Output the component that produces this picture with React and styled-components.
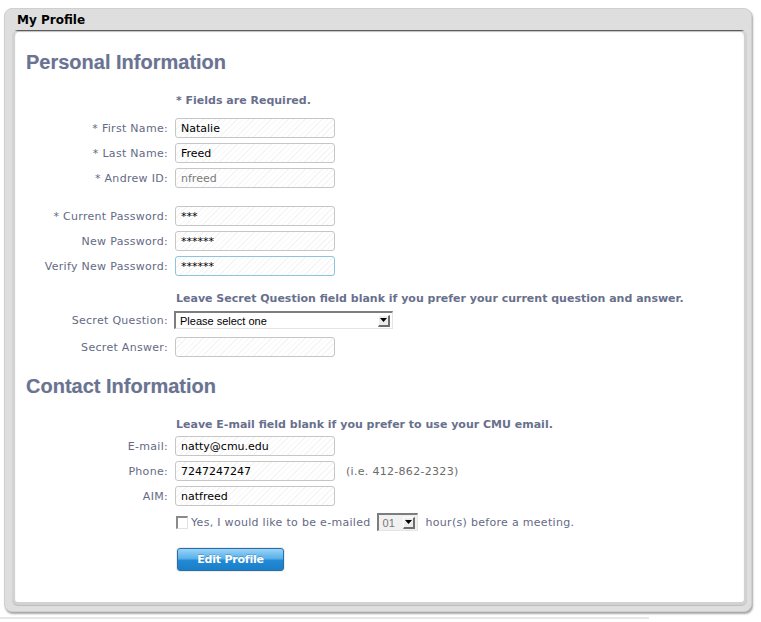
import React from "react";
import styled, { createGlobalStyle } from "styled-components";

const GlobalStyle = createGlobalStyle`
  html, body {
    margin: 0;
    padding: 0;
    background: #ffffff;
    font-family: "DejaVu Sans", Verdana, sans-serif;
  }
`;

const Page = styled.div`
  width: 761px;
  height: 622px;
  padding-top: 8px;
  box-sizing: border-box;
`;

const Panel = styled.div`
  margin-left: 4px;
  width: 748px;
  height: 604px;
  box-sizing: border-box;
  background: #dedede;
  border: 1px solid #cfcfcf;
  border-radius: 8px;
  box-shadow: 1px 2px 2px rgba(0, 0, 0, 0.35);
  display: flex;
  flex-direction: column;
`;

const TitleBar = styled.div`
  height: 21px;
  padding-left: 12px;
  display: flex;
  align-items: center;
  font-size: 12px;
  font-weight: bold;
  color: #000;
`;

const Body = styled.div`
  flex: 1;
  margin: 0 4px 6px 7px;
  background: #ffffff;
  border: 3px solid #d2d2d2;
  border-top: 1px solid #5c5c5c;
  border-radius: 6px;
  box-shadow: inset 0 1px 1px rgba(0, 0, 0, 0.25), 0 1px 0 #bdbdbd;
  padding-top: 19px;
`;

const SectionTitle = styled.h2`
  margin: ${(p) => p.mt || 0}px 0 0 0;
  padding-left: 11px;
  height: 24px;
  line-height: 24px;
  font-family: "Liberation Sans", Arial, sans-serif;
  font-size: 20px;
  font-weight: bold;
  color: #6a7391;
  text-shadow: 0 0 1px rgba(106, 115, 145, 0.3);
`;

const Row = styled.div`
  display: flex;
  align-items: center;
  gap: 7px;
  height: ${(p) => p.h || 20}px;
  margin-top: ${(p) => p.mt || 0}px;
`;

const Label = styled.div`
  width: 153px;
  flex-shrink: 0;
  text-align: right;
  font-size: 11px;
  letter-spacing: 0.3px;
  color: #646a84;
  white-space: nowrap;
`;

const Note = styled.div`
  font-size: 11px;
  font-weight: bold;
  color: #69708d;
  white-space: nowrap;
  padding-left: 1px;
`;

const TextInput = styled.input`
  width: 160px;
  height: 20px;
  box-sizing: border-box;
  margin: 0;
  padding: 0 5px;
  border: 1px solid ${(p) => (p.focused ? "#8cc3dd" : "#c6c6c6")};
  border-radius: 3px;
  background: repeating-linear-gradient(
    135deg,
    #ffffff 0 3px,
    #f5f5f5 3px 4px
  );
  font-family: "DejaVu Sans", Verdana, sans-serif;
  font-size: 11px;
  color: ${(p) => (p.disabled ? "#7a7a7a" : "#000")};
  outline: none;
`;

const SelectBox = styled.div`
  width: ${(p) => p.w}px;
  height: 18px;
  box-sizing: border-box;
  display: flex;
  align-items: center;
  justify-content: space-between;
  border-top: 2px solid #7d7d7d;
  border-left: 2px solid #7d7d7d;
  border-right: 1px solid #e4e4e4;
  border-bottom: 1px solid #e4e4e4;
  background: ${(p) => (p.muted ? "#f1f1f1" : "#ffffff")};
  padding-left: 4px;
  font-family: "Liberation Sans", Arial, sans-serif;
  font-size: 11px;
  letter-spacing: 0;
  color: ${(p) => (p.muted ? "#777" : "#000")};
  margin-left: ${(p) => p.ml || 0}px;
`;

const ArrowBox = styled.div`
  width: 12px;
  height: 12px;
  margin-right: 2px;
  box-sizing: border-box;
  background: #ececec;
  border-top: 1px solid #ffffff;
  border-left: 1px solid #ffffff;
  border-right: 2px solid #6e6e6e;
  border-bottom: 2px solid #6e6e6e;
  display: flex;
  align-items: center;
  justify-content: center;
`;

const Hint = styled.span`
  margin-left: 4px;
  font-size: 11px;
  letter-spacing: 0.3px;
  color: #6b6b6b;
`;

const CheckRow = styled.div`
  display: flex;
  align-items: center;
  height: 20px;
  margin-top: 6px;
  margin-left: 161px;
  font-size: 11px;
  letter-spacing: 0.3px;
  color: #646a84;
  white-space: nowrap;
`;

const CheckBox = styled.span`
  width: 12px;
  height: 13px;
  box-sizing: border-box;
  border-top: 2px solid #8a8a8a;
  border-left: 2px solid #8a8a8a;
  border-right: 1px solid #e2e2e2;
  border-bottom: 1px solid #e2e2e2;
  margin-right: 3px;
`;

const InlineText = styled.span`
  margin-left: ${(p) => p.ml || 0}px;
`;

const ButtonWrap = styled.div`
  margin: 15px 0 0 161px;
  display: inline-block;
  padding: 1px;
  border-radius: 4px;
  background: #ececec;
`;

const Button = styled.button`
  width: 107px;
  height: 23px;
  margin: 0;
  border: 1px solid #2b6ea6;
  border-radius: 3px;
  background: linear-gradient(#9ad4f7 0%, #58b0ea 45%, #2389d5 55%, #1a7fc9 100%);
  color: #ffffff;
  font-family: "DejaVu Sans", Verdana, sans-serif;
  font-size: 11px;
  font-weight: bold;
  letter-spacing: -0.2px;
  text-shadow: 0 -1px 0 rgba(0, 0, 0, 0.2);
  cursor: pointer;
`;

const BottomLine = styled.div`
  width: 649px;
  height: 2px;
  margin-top: 5px;
  background: #e6e6e6;
`;

const Arrow = () => (
  <ArrowBox>
    <svg width="7" height="4" viewBox="0 0 7 4">
      <polygon points="0,0 7,0 3.5,4" fill="#000" />
    </svg>
  </ArrowBox>
);

const Field = ({ label, mt, ...rest }) => (
  <Row mt={mt}>
    <Label>{label}</Label>
    <TextInput readOnly {...rest} />
  </Row>
);

export default function App() {
  return (
    <Page>
      <GlobalStyle />
      <Panel>
        <TitleBar>My Profile</TitleBar>
        <Body>
          <SectionTitle>Personal Information</SectionTitle>
          <Row h={14} mt={19}>
            <Label />
            <Note>* Fields are Required.</Note>
          </Row>
          <Field label="* First Name:" value="Natalie" mt={11} />
          <Field label="* Last Name:" value="Freed" mt={5} />
          <Field label="* Andrew ID:" value="nfreed" disabled mt={5} />
          <Field label="* Current Password:" value="***" mt={18} />
          <Field label="New Password:" value="******" mt={5} />
          <Field label="Verify New Password:" value="******" focused mt={5} />
          <Row h={14} mt={15}>
            <Label />
            <Note>
              Leave Secret Question field blank if you prefer your current
              question and answer.
            </Note>
          </Row>
          <Row mt={5}>
            <Label>Secret Question:</Label>
            <SelectBox w={219} ml={-1}>
              Please select one
              <Arrow />
            </SelectBox>
          </Row>
          <Field label="Secret Answer:" value="" mt={7} />
          <SectionTitle mt={17}>Contact Information</SectionTitle>
          <Row h={14} mt={19}>
            <Label />
            <Note>Leave E-mail field blank if you prefer to use your CMU email.</Note>
          </Row>
          <Field label="E-mail:" value="natty@cmu.edu" mt={5} />
          <Row mt={5}>
            <Label>Phone:</Label>
            <TextInput readOnly value="7247247247" />
            <Hint>(i.e. 412-862-2323)</Hint>
          </Row>
          <Field label="AIM:" value="natfreed" mt={5} />
          <CheckRow>
            <CheckBox />
            Yes, I would like to be e-mailed
            <SelectBox w={41} ml={6} muted>
              01
              <Arrow />
            </SelectBox>
            <InlineText ml={8}>hour(s) before a meeting.</InlineText>
          </CheckRow>
          <ButtonWrap>
            <Button>Edit Profile</Button>
          </ButtonWrap>
        </Body>
      </Panel>
      <BottomLine />
    </Page>
  );
}
